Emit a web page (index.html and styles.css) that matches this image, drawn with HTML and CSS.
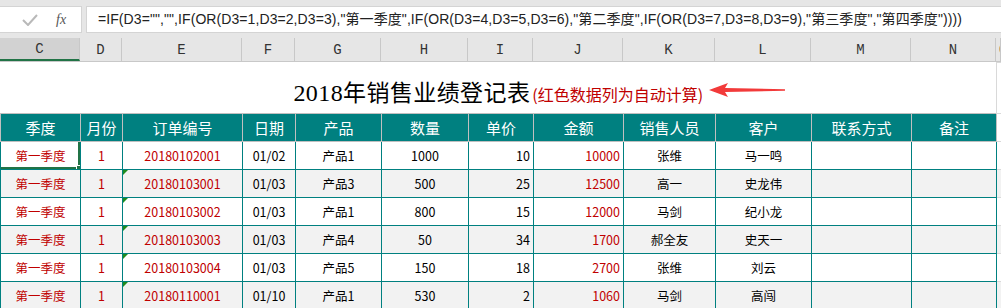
FILE: index.html
```html
<!DOCTYPE html>
<html lang="zh-CN">
<head>
    <meta charset="UTF-8">
    <meta name="viewport" content="width=device-width, initial-scale=1.0">
    <title>2018年销售业绩登记表</title>
    <link rel="stylesheet" href="styles.css">
</head>
<body>
    <!-- 编辑栏 -->
    <div class="fbar">
        <div class="fbox">
            <svg class="ok" width="16" height="12" viewBox="0 0 16 12">
                <polyline points="1,6 6,11 15,1" fill="none" stroke="#b9b9b9" stroke-width="2"/>
            </svg>
            <span class="fx">fx</span>
        </div>
        <div class="formula">=IF(D3="","",IF(OR(D3=1,D3=2,D3=3),"第一季度",IF(OR(D3=4,D3=5,D3=6),"第二季度",IF(OR(D3=7,D3=8,D3=9),"第三季度","第四季度"))))</div>
    </div>

    <!-- 列标 -->
    <div class="colheads">
        <div class="ch sel">C</div>
        <div class="ch">D</div>
        <div class="ch">E</div>
        <div class="ch">F</div>
        <div class="ch">G</div>
        <div class="ch">H</div>
        <div class="ch">I</div>
        <div class="ch">J</div>
        <div class="ch">K</div>
        <div class="ch">L</div>
        <div class="ch">M</div>
        <div class="ch">N</div>
        <div class="ch edge">O</div>
    </div>

    <div class="sheet">
        <table class="grid">
            <colgroup>
                <col class="w-c"><col class="w-d"><col class="w-e"><col class="w-f"><col class="w-g"><col class="w-h">
                <col class="w-i"><col class="w-j"><col class="w-k"><col class="w-l"><col class="w-m"><col class="w-n"><col class="w-o">
            </colgroup>
            <tr class="title-row">
                <td colspan="12" class="title">
                    <span class="big"><span class="num">2018</span>年销售业绩登记表</span><span class="note">(红色数据列为自动计算)</span>
                </td>
                <td class="pad"></td>
            </tr>
            <tr class="head">
                <td>季度</td><td>月份</td><td>订单编号</td><td>日期</td><td>产品</td><td>数量</td>
                <td>单价</td><td>金额</td><td>销售人员</td><td>客户</td><td>联系方式</td><td>备注</td><td class="pad"></td>
            </tr>
            <tr>
                <td class="red active">第一季度<span class="handle"></span></td><td class="red">1</td><td class="red">20180102001</td><td>01/02</td><td>产品1</td><td>1000</td>
                <td class="r">10</td><td class="r red">10000</td><td>张维</td><td>马一鸣</td><td></td><td></td><td class="pad"></td>
            </tr>
            <tr class="alt">
                <td class="red">第一季度</td><td class="red">1</td><td class="red txt">20180103001</td><td>01/03</td><td>产品3</td><td>500</td>
                <td class="r">25</td><td class="r red">12500</td><td>高一</td><td>史龙伟</td><td></td><td></td><td class="pad"></td>
            </tr>
            <tr>
                <td class="red">第一季度</td><td class="red">1</td><td class="red txt">20180103002</td><td>01/03</td><td>产品1</td><td>800</td>
                <td class="r">15</td><td class="r red">12000</td><td>马剑</td><td>纪小龙</td><td></td><td></td><td class="pad"></td>
            </tr>
            <tr class="alt">
                <td class="red">第一季度</td><td class="red">1</td><td class="red txt">20180103003</td><td>01/03</td><td>产品4</td><td>50</td>
                <td class="r">34</td><td class="r red">1700</td><td>郝全友</td><td>史天一</td><td></td><td></td><td class="pad"></td>
            </tr>
            <tr>
                <td class="red">第一季度</td><td class="red">1</td><td class="red txt">20180103004</td><td>01/03</td><td>产品5</td><td>150</td>
                <td class="r">18</td><td class="r red">2700</td><td>张维</td><td>刘云</td><td></td><td></td><td class="pad"></td>
            </tr>
            <tr class="alt">
                <td class="red">第一季度</td><td class="red">1</td><td class="red txt">20180110001</td><td>01/10</td><td>产品1</td><td>530</td>
                <td class="r">2</td><td class="r red">1060</td><td>马剑</td><td>高闯</td><td></td><td></td><td class="pad"></td>
            </tr>
        </table>

        <!-- 红色箭头 (浮动图形) -->
        <svg class="arrow" width="78" height="16" viewBox="0 0 78 16">
            <polygon points="0,8 19,1 16,6 76,7.3 76,8.7 16,10 19,15" fill="#f23a3a"/>
        </svg>
    </div>
</body>
</html>
```

FILE: styles.css
```css
body {
    margin: 0;
    padding: 0;
    width: 1001px;
    height: 308px;
    overflow: hidden;
    background-color: #fff;
    font-family: "Noto Sans CJK SC", sans-serif;
}

/* 编辑栏 */
.fbar {
    display: flex;
    gap: 4px;
    height: 38px;
    padding: 6px 0 5px 0;
    box-sizing: border-box;
    background-color: #e6e6e6;
}

.fbox {
    width: 82px;
    display: flex;
    align-items: center;
    background-color: #fff;
    border: 1px solid #d4d4d4;
    border-left: none;
    box-sizing: border-box;
}

.ok {
    margin-left: 22px;
}

.fx {
    margin-left: 18px;
    font-family: "Liberation Serif", serif;
    font-style: italic;
    font-size: 14px;
    color: #555;
}

.formula {
    flex: 1;
    background-color: #fff;
    border: 1px solid #d4d4d4;
    border-right: none;
    padding-left: 11px;
    font-family: "Liberation Sans", "Noto Sans CJK SC", sans-serif;
    font-size: 14px;
    letter-spacing: 0.08px;
    line-height: 25px;
    color: #222;
    white-space: nowrap;
    overflow: hidden;
}

/* 列标 */
.colheads {
    display: grid;
    grid-template-columns: 80px 42px 120px 53px 86px 87px 65px 90px 92px 96px 100px 85px 5px;
    height: 24px;
    background-color: #e6e6e6;
    border-bottom: 1px solid #c8c8c8;
    box-sizing: border-box;
}

.ch {
    border-right: 1px solid #c8c8c8;
    text-align: center;
    font-family: "Liberation Mono", monospace;
    font-size: 14px;
    line-height: 24px;
    color: #333;
    overflow: hidden;
}

.ch.edge {
    text-align: left;
    padding-left: 3px;
}

.ch.sel {
    background-color: #d2d2d2;
    border-bottom: 2px solid #217346;
    line-height: 22px;
}

/* 表格 */
.sheet {
    position: relative;
}

.grid {
    border-collapse: collapse;
    table-layout: fixed;
    width: 1001px;
}

.w-c { width: 80px; }
.w-d { width: 42px; }
.w-e { width: 120px; }
.w-f { width: 53px; }
.w-g { width: 86px; }
.w-h { width: 87px; }
.w-i { width: 65px; }
.w-j { width: 90px; }
.w-k { width: 92px; }
.w-l { width: 96px; }
.w-m { width: 100px; }
.w-n { width: 85px; }
.w-o { width: 5px; }

.grid td {
    height: 27px;
    padding: 0 3px;
    border: 1px solid #008080;
    text-align: center;
    font-size: 12.5px;
    color: #000;
    white-space: nowrap;
    overflow: hidden;
    position: relative;
}

.grid tr.alt td {
    background-color: #f2f2f2;
}

.grid td.r {
    text-align: right;
}

.grid td.red {
    color: #c00000;
}

.grid td.pad {
    background-color: #fff;
    border: 1px solid #d9d9d9;
}

/* 标题行 */
.title-row td.title {
    height: 44px;
    border: none;
    padding: 6px 0 0 0;
    text-align: center;
}

.big {
    font-size: 23px;
    letter-spacing: 0.4px;
    margin-right: 2px;
    color: #000;
}

.num {
    font-family: "Liberation Serif", serif;
    font-size: 24px;
}

.note {
    font-size: 16px;
    color: #c00000;
}

/* 表头 */
.head td {
    background-color: #008080;
    color: #fff;
    font-size: 15px;
    border: 1px solid #c0c0c0;
}

/* 选中单元格 */
.grid td.active {
    box-shadow: inset -2px -2px 0 #217346;
}

.handle {
    position: absolute;
    right: -3px;
    bottom: -3px;
    width: 5px;
    height: 5px;
    background-color: #217346;
    border: 1px solid #fff;
    z-index: 2;
}

/* 文本格式的数字 */
.grid td.txt::before {
    content: "";
    position: absolute;
    left: 0;
    top: 0;
    border-top: 5px solid #1e8b1e;
    border-right: 5px solid transparent;
}

.arrow {
    position: absolute;
    left: 709px;
    top: 20px;
}
```
